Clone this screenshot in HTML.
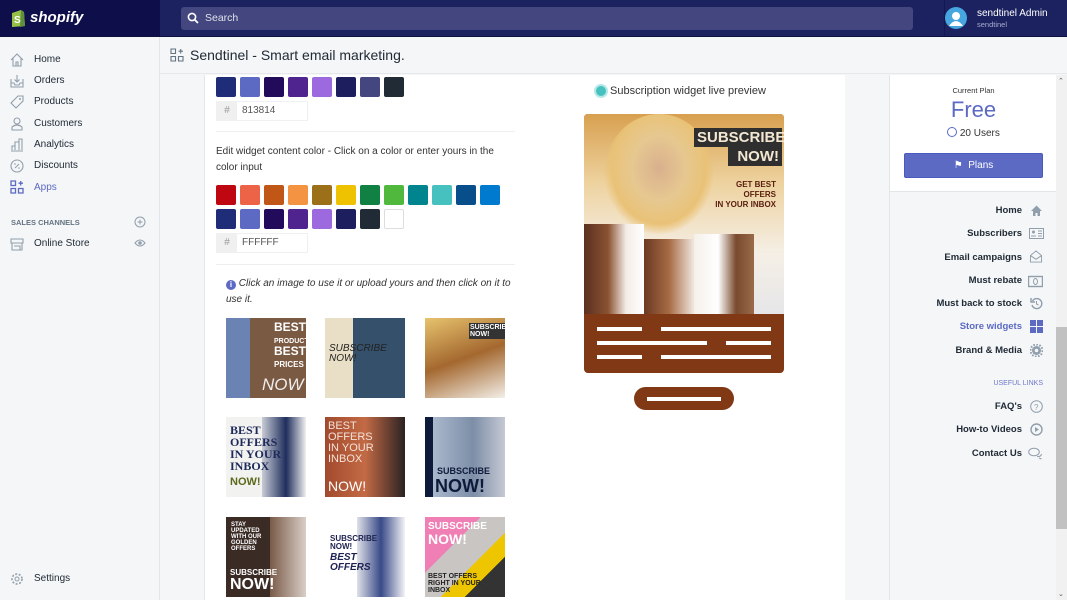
<!DOCTYPE html>
<html><head><meta charset="utf-8">
<style>
*{box-sizing:border-box;margin:0;padding:0}
body{width:1067px;height:600px;overflow:hidden;font-family:"Liberation Sans",sans-serif;background:#f4f6f8;position:relative;color:#212b36}
.abs{position:absolute}
#top{left:0;top:0;width:1067px;height:37px;background:#1c2260;border-bottom:1px solid #0d1140}
#logo{left:0;top:0;width:160px;height:36px;background:#0e0e4a}
#search{left:181px;top:7px;width:732px;height:23px;background:#43467f;border-radius:3px;color:#dfe3e8;font-size:10.5px;line-height:23px;padding-left:24px}
#side{left:0;top:37px;width:160px;height:563px;background:#f4f6f8;border-right:1px solid #e3e6e9}
.nav{position:absolute;left:34px;font-size:10px;color:#212b36}
.ni{position:absolute;left:10px;width:14px;height:14px}
#hdr{left:160px;top:37px;width:907px;height:37px;background:#f4f6f8;border-bottom:1px solid #e6e8eb}
#card{left:204px;top:75px;width:641px;height:525px;background:#fff;border-left:1px solid #e3e6e9}
.sw{position:absolute;width:20px;height:20px;border-radius:2px}
.inp{position:absolute;left:216px;width:92px;height:20px;border:1px solid #eef0f2;font-size:10px;color:#555;line-height:18px}
.inp span{display:inline-block;width:20px;background:#f0f0f0;color:#999;text-align:center;margin-right:5px}
.hr{position:absolute;left:216px;width:299px;height:1px;background:#eceef0}
.th{position:absolute;width:80px;height:80px;overflow:hidden;font-family:"Liberation Sans Narrow","Liberation Sans",sans-serif;font-weight:bold;line-height:1}
#rp{left:889px;top:75px;width:167px;height:525px;background:#f4f6f8;border-left:1px solid #e3e6e9}
.rl{position:absolute;right:34px;font-size:9.5px;font-weight:bold;color:#212b36;text-align:right}
.ri{position:absolute;right:13px;width:13px;height:13px}
</style></head><body>
<div id="top" class="abs"></div>
<div id="logo" class="abs">
<svg class="abs" style="left:10px;top:8px" width="16" height="20" viewBox="0 0 16 20"><path d="M2 5 L11 2 L14 4 L15 18 L2 19 Z" fill="#95bf47"/><path d="M11 2 L14 4 L15 18 L10 19 Z" fill="#5e8e3e"/><text x="4" y="15" font-size="10" font-weight="bold" fill="#fff" font-family="Liberation Sans">S</text></svg>
<div class="abs" style="left:30px;top:9px;color:#fff;font-weight:bold;font-style:italic;font-size:15px">shopify</div>
</div>
<div id="search" class="abs">Search
<svg class="abs" style="left:6px;top:5px" width="12" height="12" viewBox="0 0 12 12"><circle cx="5" cy="5" r="3.6" stroke="#fff" stroke-width="1.6" fill="none"/><path d="M7.6 7.6 L11 11" stroke="#fff" stroke-width="1.8"/></svg></div>
<div class="abs" style="left:944px;top:0;width:1px;height:36px;background:#141850"></div>
<svg class="abs" style="left:945px;top:7px" width="22" height="22" viewBox="0 0 22 22"><circle cx="11" cy="11" r="11" fill="#47a6e0"/><circle cx="11" cy="9" r="4" fill="#fff"/><path d="M4 19 Q11 9 18 19 Z" fill="#fff"/></svg>
<div class="abs" style="left:977px;top:8px;color:#fff;font-size:10px">sendtinel Admin</div>
<div class="abs" style="left:977px;top:20px;color:#a9acd0;font-size:7.5px">sendtinel</div>

<div id="side" class="abs">
<svg class="ni" style="top:16px" viewBox="0 0 14 14"><path d="M1 7 L7 1 L13 7 M3 5 V13 H11 V5 M6 13 V9 H8 V13" fill="none" stroke="#919eab" stroke-width="1.1"/></svg><div class="nav" style="top:17px">Home</div>
<svg class="ni" style="top:37px" viewBox="0 0 14 14"><path d="M1 5 V13 H13 V5 M1 9 H4 L5 11 H9 L10 9 H13 M7 1 V8 M4.5 5.5 L7 8 L9.5 5.5" fill="none" stroke="#919eab" stroke-width="1.1"/></svg><div class="nav" style="top:38px">Orders</div>
<svg class="ni" style="top:58px" viewBox="0 0 14 14"><path d="M8 1 H13 V6 L6 13 L1 8 Z" fill="none" stroke="#919eab" stroke-width="1.1"/><circle cx="10" cy="4" r="1" fill="#919eab"/></svg><div class="nav" style="top:59px">Products</div>
<svg class="ni" style="top:80px" viewBox="0 0 14 14"><circle cx="7" cy="4" r="3" fill="none" stroke="#919eab" stroke-width="1.1"/><path d="M2 13 V10 Q7 6 12 10 V13 Z" fill="none" stroke="#919eab" stroke-width="1.1"/></svg><div class="nav" style="top:81px">Customers</div>
<svg class="ni" style="top:101px" viewBox="0 0 14 14"><path d="M1 13 H13 M2 12 V8 H5 V12 M5 12 V4 H9 V12 M9 12 V1 H12 V12" fill="none" stroke="#919eab" stroke-width="1.1"/></svg><div class="nav" style="top:102px">Analytics</div>
<svg class="ni" style="top:122px" viewBox="0 0 14 14"><circle cx="7" cy="7" r="6" fill="none" stroke="#919eab" stroke-width="1.1"/><path d="M5 9 L9 5" stroke="#919eab"/><circle cx="5" cy="5" r=".8" fill="#919eab"/><circle cx="9" cy="9" r=".8" fill="#919eab"/></svg><div class="nav" style="top:123px">Discounts</div>
<svg class="ni" style="top:143px" viewBox="0 0 14 14"><path d="M1 1 H5.5 V5.5 H1 Z M1 8.5 H5.5 V13 H1 Z M8.5 8.5 H13 V13 H8.5 Z M10.7 1 V5.5 M8.5 3.2 H13" fill="none" stroke="#5c6ac4" stroke-width="1.3"/></svg><div class="nav" style="top:145px;color:#5c6ac4">Apps</div>
<div class="abs" style="left:11px;top:181px;font-size:7.5px;font-weight:bold;color:#637381">SALES CHANNELS</div>
<svg class="abs" style="left:134px;top:179px" width="12" height="12" viewBox="0 0 12 12"><circle cx="6" cy="6" r="5" fill="none" stroke="#919eab"/><path d="M6 3.5 V8.5 M3.5 6 H8.5" stroke="#919eab"/></svg>
<svg class="ni" style="top:200px" viewBox="0 0 14 14"><path d="M1 2 H13 V6 H1 Z M2 6 V13 H12 V6 M4 9 H10 V13" fill="none" stroke="#919eab" stroke-width="1.1"/></svg><div class="nav" style="top:201px">Online Store</div>
<svg class="abs" style="left:134px;top:201px" width="12" height="10" viewBox="0 0 12 10"><path d="M1 5 Q6 -1 11 5 Q6 11 1 5 Z" fill="none" stroke="#919eab"/><circle cx="6" cy="5" r="1.8" fill="#919eab"/></svg>
<svg class="ni" style="top:535px" viewBox="0 0 14 14"><circle cx="7" cy="7" r="2" fill="none" stroke="#919eab"/><circle cx="7" cy="7" r="5" fill="none" stroke="#919eab" stroke-width="1.6" stroke-dasharray="2 1.6"/></svg><div class="nav" style="top:536px">Settings</div>
</div>

<div id="hdr" class="abs">
<svg class="abs" style="left:10px;top:11px" width="14" height="14" viewBox="0 0 14 14"><path d="M1 1 H5.5 V5.5 H1 Z M1 8.5 H5.5 V13 H1 Z M8.5 8.5 H13 V13 H8.5 Z M10.7 1 V5.5 M8.5 3.2 H13" fill="none" stroke="#637381" stroke-width="1.1"/></svg>
<div class="abs" style="left:30px;top:10px;font-size:14px;color:#212b36">Sendtinel - Smart email marketing.</div>
</div>

<div id="card" class="abs"></div>
<div class="sw" style="left:216px;top:77px;background:#1f2c77"></div>
<div class="sw" style="left:240px;top:77px;background:#5c6ac4"></div>
<div class="sw" style="left:264px;top:77px;background:#220b5a"></div>
<div class="sw" style="left:288px;top:77px;background:#50248f"></div>
<div class="sw" style="left:312px;top:77px;background:#9c6ade"></div>
<div class="sw" style="left:336px;top:77px;background:#1c1e5e"></div>
<div class="sw" style="left:360px;top:77px;background:#43467f"></div>
<div class="sw" style="left:384px;top:77px;background:#212b36"></div>
<div class="inp" style="top:101px"><span>#</span>813814</div>
<div class="hr" style="top:131px"></div>
<div class="abs" style="left:216px;top:144px;width:300px;font-size:10px;line-height:16px;color:#333">Edit widget content color - Click on a color or enter yours in the color input</div>
<div class="sw" style="left:216px;top:185px;background:#bf0711"></div>
<div class="sw" style="left:240px;top:185px;background:#ed6347"></div>
<div class="sw" style="left:264px;top:185px;background:#c05717"></div>
<div class="sw" style="left:288px;top:185px;background:#f49342"></div>
<div class="sw" style="left:312px;top:185px;background:#9c6f19"></div>
<div class="sw" style="left:336px;top:185px;background:#eec200"></div>
<div class="sw" style="left:360px;top:185px;background:#108043"></div>
<div class="sw" style="left:384px;top:185px;background:#50b83c"></div>
<div class="sw" style="left:408px;top:185px;background:#00848e"></div>
<div class="sw" style="left:432px;top:185px;background:#47c1bf"></div>
<div class="sw" style="left:456px;top:185px;background:#084e8a"></div>
<div class="sw" style="left:480px;top:185px;background:#007ace"></div>
<div class="sw" style="left:216px;top:209px;background:#1f2c77"></div>
<div class="sw" style="left:240px;top:209px;background:#5c6ac4"></div>
<div class="sw" style="left:264px;top:209px;background:#220b5a"></div>
<div class="sw" style="left:288px;top:209px;background:#50248f"></div>
<div class="sw" style="left:312px;top:209px;background:#9c6ade"></div>
<div class="sw" style="left:336px;top:209px;background:#1c1e5e"></div>
<div class="sw" style="left:360px;top:209px;background:#212b36"></div>
<div class="sw" style="left:384px;top:209px;background:#fff;border:1px solid #ddd"></div>
<div class="inp" style="top:233px"><span>#</span>FFFFFF</div>
<div class="hr" style="top:264px"></div>
<div class="abs" style="left:226px;top:276px;width:285px;font-size:10px;line-height:16px;color:#333;font-style:italic"><span style="display:inline-block;width:10px;height:10px;border-radius:50%;background:#5c6ac4;color:#fff;font-size:8px;line-height:10px;text-align:center;font-style:normal;font-weight:bold;vertical-align:-1px">i</span> Click an image to use it or upload yours and then click on it to use it.</div>

<div class="th" style="left:226px;top:318px;background:linear-gradient(90deg,#6a83b3 0 30%,#7b5a44 30% 100%)"><div style="position:absolute;left:48px;top:3px;color:#fff;font-size:12px">BEST<br><span style="font-size:7px">PRODUCTS</span><br>BEST<br><span style="font-size:8px">PRICES</span></div><div style="position:absolute;left:36px;top:58px;color:#eee;font-size:17px;font-weight:normal;font-style:italic">NOW</div></div>
<div class="th" style="left:325px;top:318px;background:linear-gradient(90deg,#e9dfc6 0 35%,#35506a 35% 100%)"><div style="position:absolute;left:4px;top:26px;color:#222;font-size:10px;font-style:italic;font-weight:normal">SUBSCRIBE<br>NOW!</div></div>
<div class="th" style="left:425px;top:318px;background:linear-gradient(160deg,#e7c36e,#a4682f 50%,#f3efe8)"><div style="position:absolute;left:44px;top:5px;background:#333;color:#fff;font-size:7px;padding:1px">SUBSCRIBE<br>NOW!</div></div>
<div class="th" style="left:226px;top:417px;background:linear-gradient(90deg,#f2f2f0 0 45%,#c9ccd6 45%, #1e2d5c 75%,#f0f0f0)"><div style="position:absolute;left:4px;top:7px;color:#1e2a5a;font-size:12px;font-family:'Liberation Serif',serif">BEST<br>OFFERS<br>IN YOUR<br>INBOX</div><div style="position:absolute;left:4px;top:60px;color:#5a6a1a;font-size:11px">NOW!</div></div>
<div class="th" style="left:325px;top:417px;background:linear-gradient(90deg,#a24a2e,#c36a45 50%,#2a2223)"><div style="position:absolute;left:3px;top:4px;color:#f4e2d8;font-size:11px;font-weight:normal">BEST<br>OFFERS<br>IN YOUR<br>INBOX</div><div style="position:absolute;left:3px;top:62px;color:#fff;font-size:14px;font-weight:normal">NOW!</div></div>
<div class="th" style="left:425px;top:417px;background:linear-gradient(90deg,#0e1a3a 0 10%,#a9b8cc 10%,#7d8ea8 60%,#c6c9d4)"><div style="position:absolute;left:12px;top:50px;color:#0e1a3a;font-size:9px">SUBSCRIBE</div><div style="position:absolute;left:10px;top:60px;color:#0e1a3a;font-size:18px">NOW!</div></div>
<div class="th" style="left:226px;top:517px;background:linear-gradient(90deg,#3a2b25 0 55%,#7a5a48 55%,#d9cfc7)"><div style="position:absolute;left:5px;top:5px;color:#fff;font-size:6px">STAY<br>UPDATED<br>WITH OUR<br>GOLDEN<br>OFFERS</div><div style="position:absolute;left:4px;top:52px;color:#fff;font-size:8px">SUBSCRIBE</div><div style="position:absolute;left:4px;top:60px;color:#fff;font-size:16px">NOW!</div></div>
<div class="th" style="left:325px;top:517px;background:linear-gradient(90deg,#fff 0 40%,#dfe1e8 40%,#384a88 70%,#f4f4f6)"><div style="position:absolute;left:5px;top:18px;color:#1d2250;font-size:8px">SUBSCRIBE<br>NOW!</div><div style="position:absolute;left:5px;top:36px;color:#1d2250;font-size:10px;font-style:italic">BEST<br>OFFERS</div></div>
<div class="th" style="left:425px;top:517px;background:linear-gradient(135deg,#ef7fb4 0 35%,#c8c5c2 35% 60%,#eec600 60% 75%,#333 75%)"><div style="position:absolute;left:3px;top:5px;color:#fff;font-size:10px">SUBSCRIBE<br><span style="font-size:14px">NOW!</span></div><div style="position:absolute;left:3px;top:56px;color:#222;font-size:7px">BEST OFFERS<br>RIGHT IN YOUR<br>INBOX</div></div>

<div class="abs" style="left:596px;top:86px;width:10px;height:10px;border-radius:50%;background:#47c1bf;box-shadow:0 0 0 2px #b5e8e7"></div>
<div class="abs" style="left:610px;top:85px;font-size:11px;color:#333">Subscription widget live preview</div>
<div class="abs" style="left:584px;top:114px;width:200px;height:259px;border-radius:4px;background:#813814;overflow:hidden">
<div class="abs" style="left:0;top:0;width:200px;height:200px;background:linear-gradient(180deg,#d8a050 0%,#eed3a0 35%,#f5efe6 70%,#e6e6e8 100%)"></div>
<div class="abs" style="left:20px;top:0;width:110px;height:120px;border-radius:50%;background:radial-gradient(ellipse at 50% 45%,#d9b08e 0,#e6c890 35%,#e9c277 60%,transparent 72%)"></div>
<div class="abs" style="left:0;top:110px;width:60px;height:90px;background:linear-gradient(90deg,#5a3020,#8a5232 40%,#f3ece6 70%,#fff)"></div>
<div class="abs" style="left:60px;top:125px;width:50px;height:75px;background:linear-gradient(90deg,#6a3a22,#a76a44 50%,#f0e8e0)"></div>
<div class="abs" style="left:110px;top:120px;width:60px;height:80px;background:linear-gradient(90deg,#f5f0ea,#fff 40%,#7a4a2e 70%,#9a6a4a)"></div>
<div class="abs" style="left:110px;top:14px;width:88px;height:50px;"><div style="background:#2f2f2f;color:#f3e7d3;font-weight:bold;font-size:15px;padding:1px 3px;text-align:right;font-family:'Liberation Sans Narrow',sans-serif;width:88px">SUBSCRIBE</div><div style="background:#2f2f2f;color:#f3e7d3;font-weight:bold;font-size:15px;padding:1px 3px;text-align:right;width:54px;margin-left:34px;font-family:'Liberation Sans Narrow',sans-serif">NOW!</div></div>
<div class="abs" style="left:120px;top:66px;width:72px;text-align:right;color:#5a2010;font-weight:bold;font-size:8px;font-family:'Liberation Sans Narrow',sans-serif;line-height:10px">GET BEST OFFERS<br>IN YOUR INBOX</div>
<div class="abs" style="left:13px;top:213px;width:45px;height:4px;background:#fff"></div>
<div class="abs" style="left:77px;top:213px;width:110px;height:4px;background:#fff"></div>
<div class="abs" style="left:13px;top:227px;width:110px;height:4px;background:#fff"></div>
<div class="abs" style="left:142px;top:227px;width:45px;height:4px;background:#fff"></div>
<div class="abs" style="left:13px;top:241px;width:45px;height:4px;background:#fff"></div>
<div class="abs" style="left:77px;top:241px;width:110px;height:4px;background:#fff"></div>
</div>
<div class="abs" style="left:634px;top:387px;width:100px;height:23px;border-radius:12px;background:#813814"></div>
<div class="abs" style="left:647px;top:397px;width:74px;height:4px;background:#fff"></div>

<div id="rp" class="abs">
<div class="abs" style="left:0;top:0;width:167px;height:117px;background:#fff;border-bottom:1px solid #e3e6e9"></div>
<div class="abs" style="left:0;top:11px;width:167px;text-align:center;font-size:7.5px;color:#333">Current Plan</div>
<div class="abs" style="left:0;top:22px;width:167px;text-align:center;font-size:22px;color:#5c6ac4">Free</div>
<div class="abs" style="left:0;top:52px;width:167px;text-align:center;font-size:10px;color:#333"><span style="display:inline-block;width:10px;height:10px;border-radius:50%;border:1.5px solid #5c6ac4;vertical-align:-1px"></span> 20 Users</div>
<div class="abs" style="left:14px;top:78px;width:139px;height:25px;background:#5c6ac4;border-radius:2px;border:1px solid #4959bd;color:#fff;font-size:10px;text-align:center;line-height:23px"><span style="font-size:10px">&#9873;</span>&nbsp; Plans</div>
<div class="rl" style="top:130px">Home</div><svg class="ri" style="top:129px" viewBox="0 0 13 13"><path d="M1 7 L6.5 1.5 L12 7 H10 V12 H7.5 V9 H5.5 V12 H3 V7 Z" fill="#919eab"/></svg>
<div class="rl" style="top:153px">Subscribers</div><svg class="ri" style="top:152px;width:15px;right:12px" viewBox="0 0 15 13"><rect x=".5" y="1.5" width="14" height="10" fill="none" stroke="#919eab"/><circle cx="4.5" cy="5" r="1.5" fill="#919eab"/><path d="M2 9 H7 M9 4 H13 M9 6.5 H13 M9 9 H13" stroke="#919eab"/></svg>
<div class="rl" style="top:177px">Email campaigns</div><svg class="ri" style="top:175px;width:14px" viewBox="0 0 14 14"><path d="M1 6 L7 1 L13 6 V13 H1 Z M1 6 L7 10 L13 6" fill="none" stroke="#919eab"/></svg>
<div class="rl" style="top:200px">Must rebate</div><svg class="ri" style="top:200px;width:15px" viewBox="0 0 15 11"><rect x=".5" y=".5" width="14" height="10" fill="none" stroke="#919eab" stroke-width="1.4"/><ellipse cx="7.5" cy="5.5" rx="2" ry="3" fill="none" stroke="#919eab"/></svg>
<div class="rl" style="top:223px">Must back to stock</div><svg class="ri" style="top:222px" viewBox="0 0 13 13"><path d="M2.5 4 A5 5 0 1 1 2 8" fill="none" stroke="#919eab" stroke-width="1.4"/><path d="M1 1 V5 H5" fill="none" stroke="#919eab" stroke-width="1.4"/><path d="M6.5 4 V7 L8.5 8" fill="none" stroke="#919eab"/></svg>
<div class="rl" style="top:246px;color:#5c6ac4">Store widgets</div><svg class="ri" style="top:245px" viewBox="0 0 13 13"><rect x="0" y="0" width="6" height="6" fill="#5c6ac4"/><rect x="7" y="0" width="6" height="6" fill="#5c6ac4"/><rect x="0" y="7" width="6" height="6" fill="#5c6ac4"/><rect x="7" y="7" width="6" height="6" fill="#5c6ac4"/></svg>
<div class="rl" style="top:270px">Brand &amp; Media</div><svg class="ri" style="top:269px" viewBox="0 0 13 13"><circle cx="6.5" cy="6.5" r="4.5" fill="#919eab"/><circle cx="6.5" cy="6.5" r="6" fill="none" stroke="#919eab" stroke-width="2" stroke-dasharray="1.6 1.5"/><circle cx="6.5" cy="6.5" r="1.8" fill="#f4f6f8"/></svg>
<div class="abs" style="right:13px;top:305px;font-size:7px;color:#6b77c9">USEFUL LINKS</div>
<div class="rl" style="top:326px">FAQ's</div><svg class="ri" style="top:325px" viewBox="0 0 13 13"><circle cx="6.5" cy="6.5" r="5.8" fill="none" stroke="#919eab"/><text x="4" y="10" font-size="8" fill="#919eab" font-family="Liberation Sans">?</text></svg>
<div class="rl" style="top:349px">How-to Videos</div><svg class="ri" style="top:348px" viewBox="0 0 13 13"><circle cx="6.5" cy="6.5" r="5.5" fill="none" stroke="#919eab" stroke-width="1.4"/><path d="M5 4 L9 6.5 L5 9 Z" fill="#919eab"/></svg>
<div class="rl" style="top:373px">Contact Us</div><svg class="ri" style="top:372px;width:15px" viewBox="0 0 15 13"><ellipse cx="6" cy="5" rx="5.3" ry="3.8" fill="none" stroke="#919eab"/><path d="M9 9.5 Q13 10 13.5 7 M11 11 L13.5 12" fill="none" stroke="#919eab"/></svg>
</div>
<div class="abs" style="left:1056px;top:75px;width:11px;height:525px;background:#f1f1f1"></div>
<div class="abs" style="left:1056px;top:327px;width:11px;height:202px;background:#c1c1c1"></div>
<div class="abs" style="left:1058px;top:77px;font-size:7px;color:#555">&#8963;</div>
<div class="abs" style="left:1058px;top:590px;font-size:7px;color:#555">&#8964;</div>
</body></html>
